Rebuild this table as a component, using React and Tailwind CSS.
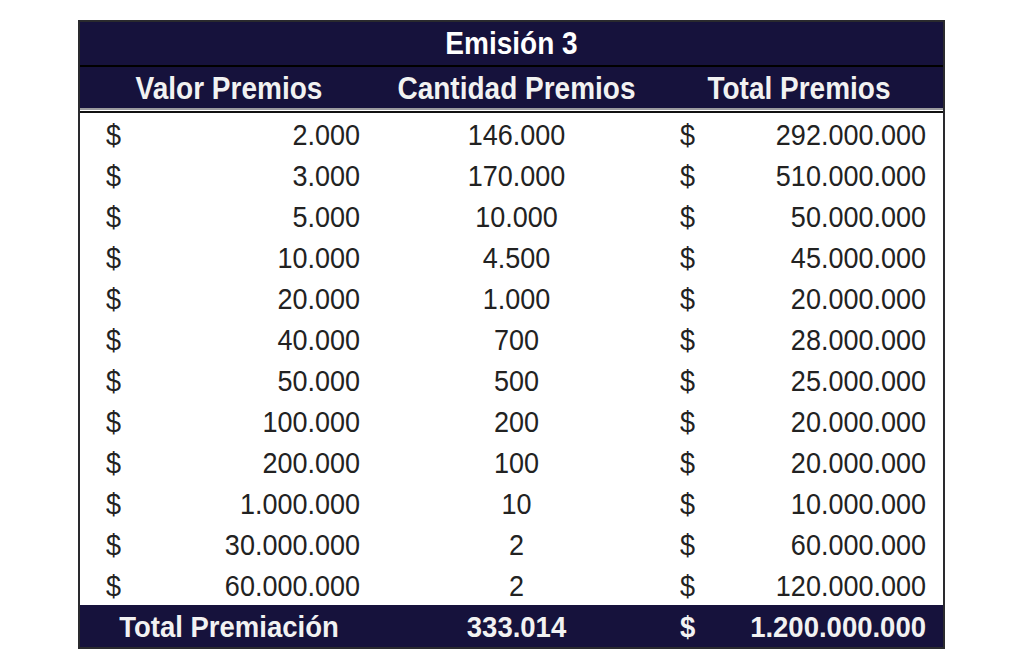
import React from "react";

const rows = [
  ["2.000", "146.000", "292.000.000"],
  ["3.000", "170.000", "510.000.000"],
  ["5.000", "10.000", "50.000.000"],
  ["10.000", "4.500", "45.000.000"],
  ["20.000", "1.000", "20.000.000"],
  ["40.000", "700", "28.000.000"],
  ["50.000", "500", "25.000.000"],
  ["100.000", "200", "20.000.000"],
  ["200.000", "100", "20.000.000"],
  ["1.000.000", "10", "10.000.000"],
  ["30.000.000", "2", "60.000.000"],
  ["60.000.000", "2", "120.000.000"],
];

const font = { fontFamily: '"Liberation Sans", Arial, sans-serif' };

function T({ children }) {
  return <span className="inline-block scale-y-110">{children}</span>;
}

export default function App() {
  return (
    <div className="w-full h-[669px] bg-white pt-[20px] pl-[78px]" style={font}>
      <div className="w-[867px] border-2 border-[#2a2a2e] flex flex-col">
        <div className="h-[43px] bg-[#16123c] flex items-center justify-center text-white font-bold text-[28px] leading-none">
          <T>Emisión 3</T>
        </div>
        <div className="h-[2px] bg-black" />
        <div className="h-[41px] pt-[3px] bg-[#16123c] grid grid-cols-[298px_277px_1fr] items-center text-[#f2f2f2] font-bold text-[28px] leading-none">
          <div className="text-center"><T>Valor Premios</T></div>
          <div className="text-center"><T>Cantidad Premios</T></div>
          <div className="text-center"><T>Total Premios</T></div>
        </div>
        <div className="h-[2px] bg-[#9a9a9e]" />
        <div className="h-[1px] bg-white" />
        <div className="h-[2px] bg-[#111]" />
        <div className="flex flex-col bg-white text-[#222] text-[27px] leading-none">
          {rows.map((r, i) => (
            <div key={i} className="h-[41px] pt-[4px] grid grid-cols-[298px_277px_1fr] items-center">
              <div className="flex justify-between pl-[26px] pr-[18px]">
                <T>$</T>
                <T>{r[0]}</T>
              </div>
              <div className="text-center"><T>{r[1]}</T></div>
              <div className="flex justify-between pl-[25px] pr-[17px]">
                <T>$</T>
                <T>{r[2]}</T>
              </div>
            </div>
          ))}
        </div>
        <div className="h-[42px] pt-[2px] bg-[#16123c] grid grid-cols-[298px_277px_1fr] items-center text-[#f2f2f2] font-bold text-[27.5px] leading-none">
          <div className="text-center"><T>Total Premiación</T></div>
          <div className="text-center"><T>333.014</T></div>
          <div className="flex justify-between pl-[25px] pr-[17px]">
            <T>$</T>
            <T>1.200.000.000</T>
          </div>
        </div>
      </div>
    </div>
  );
}
